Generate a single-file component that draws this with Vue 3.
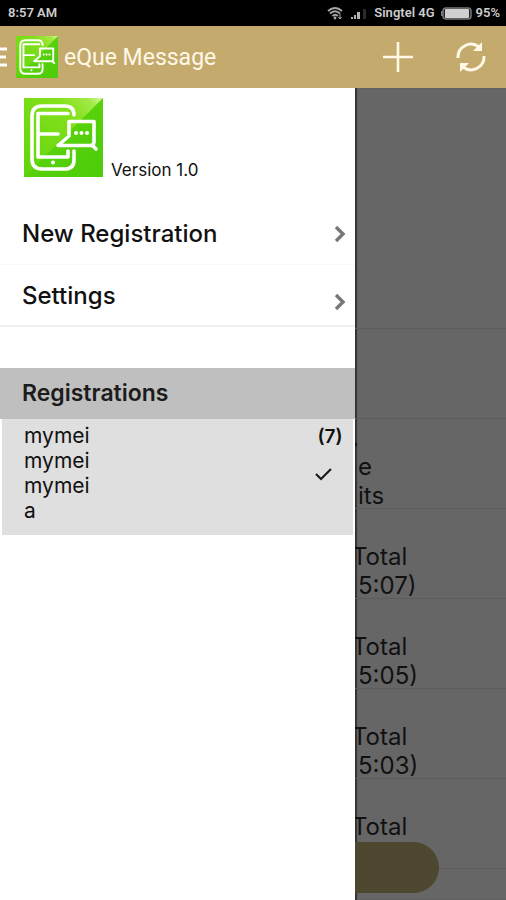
<script setup>
const links = [
  { label: 'New Registration', low: false },
  { label: 'Settings', low: true },
]
const registrations = ['mymei', 'mymei', 'mymei', 'a']
const messages = [
  { kind: 'tall', lines: [] },
  { kind: '', lines: [] },
  { kind: 'lead', lines: ['.', 'e', 'its'] },
  { kind: 'total', lines: ['Total', '5:07)'] },
  { kind: 'total', lines: ['Total', '5:05)'] },
  { kind: 'total', lines: ['Total', '5:03)'] },
  { kind: 'total', lines: ['Total', '\u00a0'] },
]
</script>

<template>
  <div class="screen">
    <svg class="defs" width="0" height="0" aria-hidden="true">
      <defs>
        <linearGradient id="leaf" x1="0" y1="0" x2="1" y2="1">
          <stop offset="0" stop-color="#62d60a" />
          <stop offset="1" stop-color="#4ccc0a" />
        </linearGradient>
        <linearGradient id="shine" x1="0" y1="1" x2="1" y2="0">
          <stop offset="0" stop-color="#5fd40a" />
          <stop offset="0.7" stop-color="#84e01c" />
          <stop offset="0.9" stop-color="#a4ea48" />
          <stop offset="1" stop-color="#dcf8b0" />
        </linearGradient>
        <symbol id="logo" viewBox="0 0 79 79">
          <rect width="79" height="79" fill="url(#leaf)" />
          <path d="M0 0H79L0 79Z" fill="url(#shine)" />
          <g fill="none" stroke="#fff" stroke-width="3.6" stroke-linecap="round" stroke-linejoin="round">
            <path d="M50 17Q50 8 41 8H18Q8 8 8 18V61Q8 71 18 71H41Q50 71 50 62V53" />
            <path d="M44 15.500H14V59H44V53" />
            <path d="M15 36H34" />
            <path d="M45 23.500H70V44L69 47.500H34L45 38Z" />
            <path d="M68 47L72 51" />
          </g>
          <g fill="#fff">
            <circle cx="29" cy="64.500" r="2" />
            <circle cx="52" cy="35" r="2" />
            <circle cx="57.500" cy="35" r="2" />
            <circle cx="63" cy="35" r="2" />
          </g>
        </symbol>
      </defs>
    </svg>

    <div class="status">
      <span class="clock">8:57 AM</span>
      <svg class="wifi" width="16" height="14" viewBox="0 0 16 14" aria-hidden="true">
        <g fill="none" stroke="#a8a8a8" stroke-width="1.900">
          <path d="M1 5Q8 -1 15 5" />
          <path d="M3 7.500Q8 3 13 7.500" />
          <path d="M5.500 10Q8 7.500 11 10" />
        </g>
        <circle cx="8" cy="12" r="1.400" fill="#a8a8a8" />
        <path d="M13 8V13M11.500 11L13 13L14.500 11" fill="none" stroke="#a8a8a8" />
      </svg>
      <svg class="signal" width="17" height="12" viewBox="0 0 17 12" aria-hidden="true">
        <g fill="#b4b4b4">
          <rect x="0" y="10" width="2" height="2" />
          <rect x="3" y="8" width="2" height="4" />
          <rect x="6" y="5" width="3" height="7" />
        </g>
        <rect x="12" y="2" width="3" height="10" fill="#2c2c2c" />
      </svg>
      <span>Singtel 4G</span>
      <svg class="battery" width="31" height="13" viewBox="0 0 31 13" aria-hidden="true">
        <rect x="2" y="1" width="28" height="11" rx="3" fill="#222" stroke="#777" stroke-width="1.500" />
        <rect x="4" y="2" width="24" height="9" rx="1" fill="#d0d0d0" />
        <rect x="0" y="4" width="2" height="5" fill="#777" />
      </svg>
      <span>95%</span>
    </div>

    <header class="bar">
      <button class="menu" aria-label="Menu">
        <svg width="7" height="20" viewBox="0 0 7 20"><path d="M0 2H7M0 10H6M0 18H7" stroke="#fff" stroke-width="3" /></svg>
      </button>
      <svg class="badge" width="42" height="42"><use href="#logo" /></svg>
      <h1>eQue Message</h1>
      <button class="tool" aria-label="Add">
        <svg width="32" height="32" viewBox="0 0 32 32"><path d="M16 1V31M1 16H31" stroke="#fff8e6" stroke-width="2.600" /></svg>
      </button>
      <button class="tool refresh" aria-label="Refresh">
        <svg width="32" height="32" viewBox="0 0 32 32">
          <g fill="none" stroke="#fff8e6" stroke-width="3">
            <path d="M3 17A13 13 0 0 1 24 6" />
            <path d="M29 15A13 13 0 0 1 8 26" />
          </g>
          <path d="M27 1V10H18ZM5 31V22H14Z" fill="#fff8e6" />
        </svg>
      </button>
    </header>

    <div class="body">
      <nav class="drawer">
        <div class="about">
          <svg width="79" height="79" role="img" aria-label="eQue"><use href="#logo" /></svg>
          <span>Version 1.0</span>
        </div>
        <a v-for="link in links" :key="link.label" href="#" class="link" :class="{ low: link.low }">
          {{ link.label }}
          <svg width="12" height="18" viewBox="0 0 12 18" aria-hidden="true">
            <path d="M2 2L9 9L2 16" fill="none" stroke="#777" stroke-width="3.400" />
          </svg>
        </a>
        <h2>Registrations</h2>
        <section class="group">
          <ul>
            <li v-for="(name, i) in registrations" :key="i">{{ name }}</li>
          </ul>
          <div class="state">
            <strong>(7)</strong>
            <svg width="18" height="14" viewBox="0 0 18 14" role="img" aria-label="Selected">
              <path d="M1 7L6 12L16 2" fill="none" stroke="#1c1c1c" stroke-width="2.200" />
            </svg>
          </div>
        </section>
      </nav>

      <main class="feed">
        <article v-for="(m, i) in messages" :key="i" class="message" :class="m.kind">
          <p v-for="line in m.lines" :key="line">{{ line }}</p>
        </article>
        <button class="action" aria-label="Action"></button>
      </main>
    </div>
  </div>
</template>

<style>
body {
  margin: 0;
  background: #666;
}
</style>

<style scoped>
.screen {
  display: flex;
  flex-direction: column;
  height: 100vh;
  overflow: hidden;
  font-family: Inter, "Liberation Sans", sans-serif;
  color: #111;
}
.defs {
  position: absolute;
}
.status {
  display: flex;
  align-items: center;
  flex: none;
  height: 26px;
  padding: 0 6px 0 8px;
  background: #000;
  color: #cdcdcd;
  font: 600 13px/26px Roboto, sans-serif;
}
.clock {
  margin-right: auto;
}
.signal {
  margin: 0 6px 0 8px;
}
.battery {
  margin: 0 4px 0 6px;
}
.bar {
  display: flex;
  align-items: center;
  flex: none;
  box-sizing: border-box;
  height: 62px;
  padding-right: 19px;
  background: #c4ab6d;
}
button {
  border: 0;
  padding: 0;
  background: none;
}
button svg {
  display: block;
}
.badge {
  margin: 0 6px 0 9px;
}
h1 {
  flex: 1;
  margin: 0;
  color: #fff8e6;
  font: 400 23px/32px Roboto, sans-serif;
  padding-top: 2px;
}
.refresh {
  margin-left: 41px;
}
.body {
  display: flex;
  flex: 1;
  min-height: 0;
}
.drawer {
  flex: none;
  width: min(355px, 80vw);
  background: #fff;
}
.about {
  display: flex;
  align-items: flex-end;
  gap: 8px;
  height: 79px;
  padding: 10px 24px 26px;
}
.about span {
  font-size: 17px;
  line-height: 14px;
}
.link {
  display: flex;
  align-items: center;
  justify-content: space-between;
  box-sizing: border-box;
  height: 62px;
  padding: 0 9px 0 22px;
  border-bottom: 1px solid #f8f8f8;
  color: #111;
  font-size: 24px;
  font-weight: 500;
  text-decoration: none;
}
.low {
  border-bottom: 2px solid #f0f0f0;
}
.low svg {
  align-self: flex-end;
  margin-bottom: 14px;
}
h2 {
  margin: 41px 0 0;
  padding-left: 22px;
  background: #bfbfbf;
  color: #1c1c1c;
  font-size: 23px;
  font-weight: 600;
  line-height: 51px;
}
.group {
  display: flex;
  justify-content: space-between;
  margin: 0 2px;
  padding: 4px 8px 12px 22px;
  background: #dfdfdf;
}
ul {
  margin: 0;
  padding: 0;
  list-style: none;
  font-size: 21px;
  line-height: 25px;
}
.state {
  display: flex;
  flex-direction: column;
  align-items: center;
  gap: 16px;
  font-size: 19px;
  line-height: 28px;
}
.state svg {
  margin-right: 12px;
}
strong {
  font-weight: 600;
}
.feed {
  position: relative;
  flex: 1;
  overflow: hidden;
  background: #666;
  box-shadow: inset 2px 0 1px #333;
}
.message {
  display: flex;
  flex-direction: column;
  justify-content: flex-end;
  box-sizing: border-box;
  height: 90px;
  padding-left: 3px;
  border-bottom: 1px solid #5c5c5c;
  font-size: 24px;
}
.tall {
  height: 241px;
}
.message p {
  margin: 0;
  line-height: 29px;
}
.message p:last-child {
  margin-bottom: -2px;
}
.total p:first-child,
.lead p:first-child {
  margin-left: -6px;
}
.action {
  position: absolute;
  left: 0;
  bottom: 7px;
  width: 84px;
  height: 51px;
  border-radius: 0 26px 26px 0;
  background: #4e472f;
}
</style>
